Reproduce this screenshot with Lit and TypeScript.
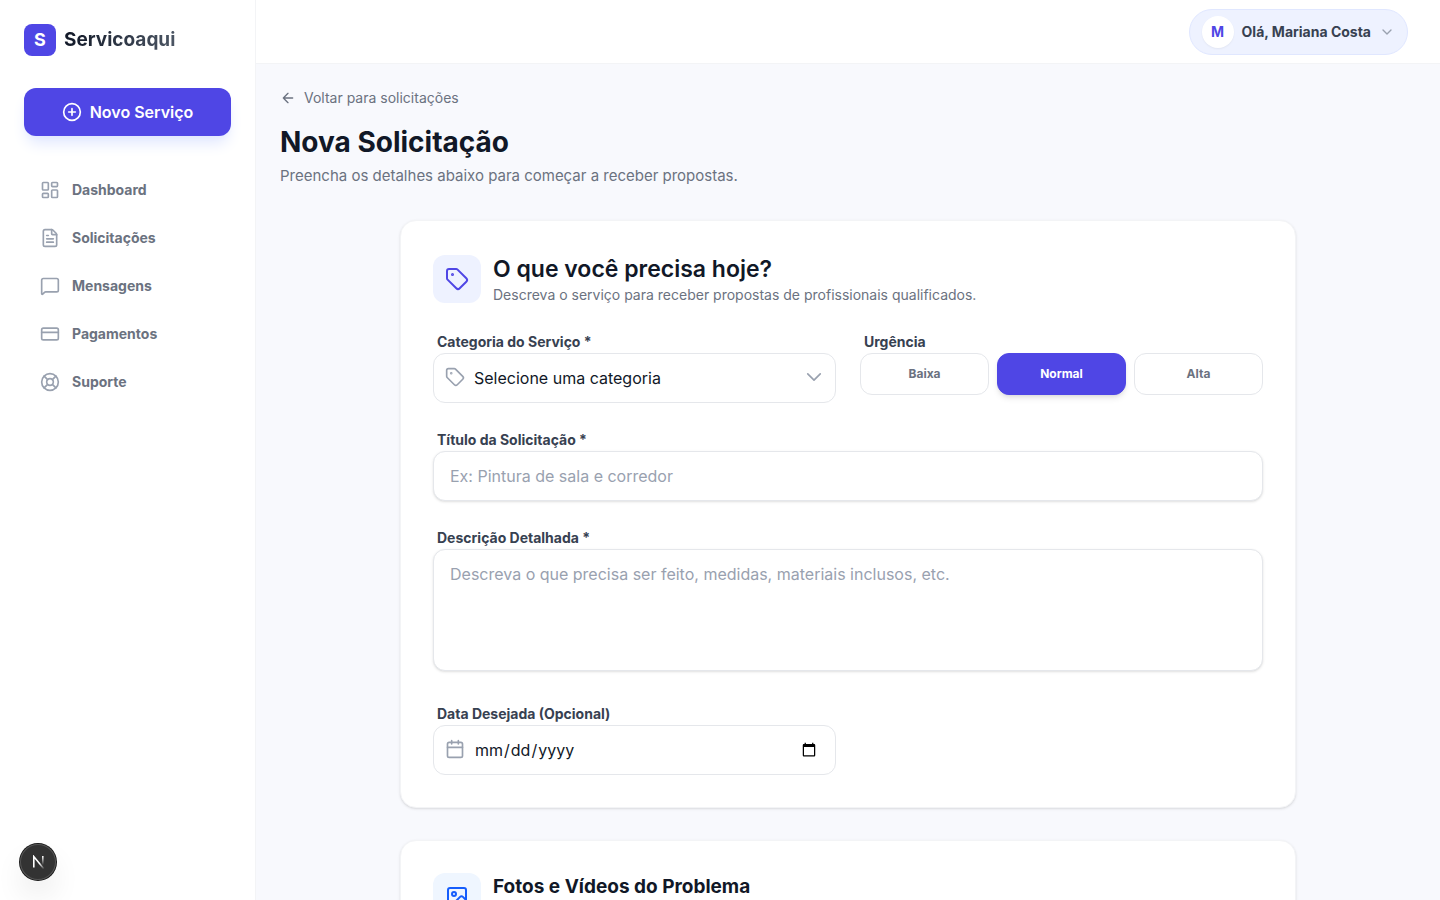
import { LitElement, html, svg, css } from "lit";
import { customElement, state } from "lit/decorators.js";
import { classMap } from "lit/directives/class-map.js";

const shapes = {
  plus: svg`<circle cx="12" cy="12" r="10"/><path d="M8 12h8M12 8v8"/>`,
  dashboard: svg`<rect width="7" height="9" x="3" y="3" rx="1"/><rect width="7" height="5" x="14" y="3" rx="1"/><rect width="7" height="9" x="14" y="12" rx="1"/><rect width="7" height="5" x="3" y="16" rx="1"/>`,
  file: svg`<path d="M6 22a2 2 0 0 1-2-2V4a2 2 0 0 1 2-2h8a2.4 2.4 0 0 1 1.704.706l3.588 3.588A2.4 2.4 0 0 1 20 8v12a2 2 0 0 1-2 2z"/><path d="M14 2v5a1 1 0 0 0 1 1h5M10 9H8M16 13H8M16 17H8"/>`,
  message: svg`<path d="M22 17a2 2 0 0 1-2 2H6.828a2 2 0 0 0-1.414.586l-2.202 2.202A.71.71 0 0 1 2 21.286V5a2 2 0 0 1 2-2h16a2 2 0 0 1 2 2z"/>`,
  card: svg`<rect width="20" height="14" x="2" y="5" rx="2"/><path d="M2 10h20"/>`,
  support: svg`<circle cx="12" cy="12" r="10"/><path d="m4.93 4.93 4.24 4.24M14.83 9.17l4.24-4.24M14.83 14.83l4.24 4.24M9.17 14.83l-4.24 4.24"/><circle cx="12" cy="12" r="4"/>`,
  back: svg`<path d="m12 19-7-7 7-7M19 12H5"/>`,
  chevron: svg`<path d="m6 9 6 6 6-6"/>`,
  chevronWide: svg`<path d="m19.5 8.25-7.5 7.5-7.5-7.5"/>`,
  tag: svg`<path d="M12.586 2.586A2 2 0 0 0 11.172 2H4a2 2 0 0 0-2 2v7.172a2 2 0 0 0 .586 1.414l8.704 8.704a2.426 2.426 0 0 0 3.42 0l6.58-6.58a2.426 2.426 0 0 0 0-3.42z"/><circle cx="7.5" cy="7.5" r=".5" fill="currentColor"/>`,
  calendar: svg`<path d="M8 2v4M16 2v4"/><rect width="18" height="18" x="3" y="4" rx="2"/><path d="M3 10h18"/>`,
  image: svg`<rect width="18" height="18" x="3" y="3" rx="2"/><circle cx="9" cy="9" r="2"/><path d="m21 15-3.086-3.086a2 2 0 0 0-2.828 0L6 21"/>`,
};

const icon = (name: keyof typeof shapes, size: number) => html`<svg
  width=${size} height=${size} viewBox="0 0 24 24" fill="none" stroke="currentColor"
  stroke-width="2" stroke-linecap="round" stroke-linejoin="round" aria-hidden="true"
>${shapes[name]}</svg>`;

const base = css`
  *, *::before, *::after { box-sizing: border-box; margin: 0; }
  svg { display: block; flex: none; }
  a { color: inherit; text-decoration: none; }
  button, input, select, textarea { font: inherit; color: inherit; }
  button { cursor: pointer; }
`;

@customElement("app-sidebar")
class AppSidebar extends LitElement {
  static styles = [base, css`
    :host {
      display: flex; flex-direction: column; gap: 32px;
      width: 256px; flex: none; padding: 24px;
      background: #fff; border-right: 1px solid #f3f4f6;
    }
    .brand { display: flex; align-items: center; gap: 8px; }
    .mark {
      display: grid; place-items: center; width: 32px; height: 32px;
      border-radius: 8px; background: #4f46e5; color: #fff; font-size: 18px; font-weight: 700;
    }
    .name {
      font-size: 19px; line-height: 28px; font-weight: 700;
      background: linear-gradient(to right, #111827, #4b5563);
      -webkit-background-clip: text; background-clip: text; color: transparent;
    }
    .new {
      display: flex; align-items: center; justify-content: center; gap: 8px;
      height: 48px; border-radius: 12px; background: #4f46e5; color: #fff;
      font-weight: 600; box-shadow: 0 10px 15px -3px #e0e7ff, 0 4px 6px -4px #e0e7ff;
    }
    nav { display: flex; flex-direction: column; gap: 4px; }
    .item {
      display: flex; align-items: center; gap: 12px; padding: 12px 16px;
      border-radius: 12px; font-size: 14px; line-height: 20px; font-weight: 700; color: #6b7280;
    }
    .item svg { color: #99a1af; }
    .item:hover { background: #f9fafb; }
  `];

  items: [keyof typeof shapes, string][] = [
    ["dashboard", "Dashboard"],
    ["file", "Solicitações"],
    ["message", "Mensagens"],
    ["card", "Pagamentos"],
    ["support", "Suporte"],
  ];

  render() {
    return html`
      <a class="brand" href="#"><span class="mark">S</span><span class="name">Servicoaqui</span></a>
      <a class="new" href="#">${icon("plus", 20)}<span>Novo Serviço</span></a>
      <nav>
        ${this.items.map(([name, label]) => html`<a class="item" href="#">${icon(name, 20)}<span>${label}</span></a>`)}
      </nav>
    `;
  }
}

@customElement("app-topbar")
class AppTopbar extends LitElement {
  static styles = [base, css`
    :host {
      display: flex; align-items: center; justify-content: flex-end;
      height: 64px; flex: none; padding: 0 32px;
      background: #fff; border-bottom: 1px solid #f3f4f6;
    }
    .user {
      display: flex; align-items: center; gap: 8px; padding: 6px 12px;
      border: 1px solid #e0e7ff; border-radius: 24px; background: #eef2ff;
      font-size: 14px; line-height: 20px; font-weight: 700; color: #374151;
    }
    .avatar {
      display: grid; place-items: center; width: 32px; height: 32px; border-radius: 50%;
      background: #fff; color: #4f46e5; box-shadow: 0 1px 2px rgb(0 0 0 / 0.05);
    }
    .user svg { color: #99a1af; }
  `];

  render() {
    return html`<button class="user" type="button">
      <span class="avatar">M</span><span>Olá, Mariana Costa</span>${icon("chevron", 16)}
    </button>`;
  }
}

@customElement("request-form")
class RequestForm extends LitElement {
  static styles = [base, css`
    :host { display: block; }
    form { display: flex; flex-direction: column; gap: 32px; max-width: 896px; margin: 0 auto; }
    .card {
      display: flex; flex-direction: column; gap: 24px; padding: 32px;
      border: 1px solid #f3f4f6; border-radius: 16px; background: #fff;
      box-shadow: 0 1px 3px rgb(0 0 0 / 0.1), 0 1px 2px -1px rgb(0 0 0 / 0.1);
    }
    .head { display: flex; align-items: center; gap: 12px; }
    .head.top { align-items: flex-start; }
    .badge {
      display: grid; place-items: center; width: 48px; height: 48px; flex: none;
      border-radius: 12px; background: #eef2ff; color: #4f46e5;
    }
    .badge.blue { background: #eff6ff; color: #155dfc; }
    h2 { font-size: 23px; line-height: 32px; font-weight: 600; color: #111827; }
    h3 { font-size: 19px; line-height: 28px; font-weight: 700; color: #111827; }
    .hint { font-size: 14px; line-height: 20px; color: #6b7280; }
    .grid { display: grid; grid-template-columns: 1fr 1fr; gap: 24px; }
    .field { display: flex; flex-direction: column; min-width: 0; border: 0; padding: 0; }
    .label {
      padding: 2px 4px 0; font-size: 14px; line-height: 22px; font-weight: 700; color: #374151;
    }
    .control {
      width: 100%; height: 50px; padding: 12px 16px; border: 1px solid #e5e7eb; border-radius: 12px;
      background: #fff; color: #111827; line-height: 24px; outline-color: #4f46e5;
    }
    .control::placeholder { color: #99a1af; opacity: 1; }
    .raised { box-shadow: 0 1px 3px rgb(0 0 0 / 0.1), 0 1px 2px -1px rgb(0 0 0 / 0.1); }
    textarea.control { display: block; height: 122px; resize: none; margin-bottom: 6px; }
    .wrap { display: grid; align-items: center; color: #99a1af; }
    .wrap > * { grid-area: 1 / 1; }
    .wrap svg { z-index: 1; pointer-events: none; margin-left: 12px; margin-bottom: 2px; }
    .wrap svg:last-child { justify-self: end; margin-right: 12px; }
    .wrap .control { padding-left: 40px; }
    .wrap select { appearance: none; }
    .options { display: grid; grid-template-columns: repeat(3, 1fr); gap: 8px; }
    .option {
      height: 42px; border: 1px solid #e5e7eb; border-radius: 12px; background: #fff;
      font-size: 12px; line-height: 16px; font-weight: 700; color: #6b7280;
    }
    .option.on {
      border-color: #4f46e5; background: #4f46e5; color: #fff;
      box-shadow: 0 4px 6px -1px rgb(0 0 0 / 0.1), 0 2px 4px -2px rgb(0 0 0 / 0.1);
    }
  `];

  @state() urgency = "Normal";

  render() {
    return html`<form>
      <section class="card">
        <header class="head">
          <span class="badge">${icon("tag", 24)}</span>
          <div>
            <h2>O que você precisa hoje?</h2>
            <p class="hint">Descreva o serviço para receber propostas de profissionais qualificados.</p>
          </div>
        </header>
        <div class="grid">
          <div class="field">
            <label class="label" for="category">Categoria do Serviço *</label>
            <div class="wrap">
              ${icon("tag", 20)}
              <select class="control" id="category"><option>Selecione uma categoria</option></select>
              ${icon("chevronWide", 20)}
            </div>
          </div>
          <div class="field" role="group" aria-labelledby="urgency">
            <span class="label" id="urgency">Urgência</span>
            <div class="options">
              ${["Baixa", "Normal", "Alta"].map((level) => html`<button type="button"
                class=${classMap({ option: true, on: this.urgency === level })}
                aria-pressed=${this.urgency === level}
                @click=${() => (this.urgency = level)}>${level}</button>`)}
            </div>
          </div>
        </div>
        <div class="field">
          <label class="label" for="title">Título da Solicitação *</label>
          <input class="control raised" id="title" type="text" placeholder="Ex: Pintura de sala e corredor">
        </div>
        <div class="field">
          <label class="label" for="details">Descrição Detalhada *</label>
          <textarea class="control raised" id="details" placeholder="Descreva o que precisa ser feito, medidas, materiais inclusos, etc."></textarea>
        </div>
        <div class="grid">
          <div class="field">
            <label class="label" for="date">Data Desejada (Opcional)</label>
            <div class="wrap">
              ${icon("calendar", 20)}
              <input class="control" id="date" type="date">
            </div>
          </div>
        </div>
      </section>
      <section class="card">
        <header class="head top">
          <span class="badge blue">${icon("image", 24)}</span>
          <h3>Fotos e Vídeos do Problema</h3>
        </header>
      </section>
    </form>`;
  }
}

@customElement("app-root")
class AppRoot extends LitElement {
  static styles = [base, css`
    :host {
      display: flex; height: 100vh; overflow: hidden; background: #f8f9fd; color: #111827;
      font-family: Inter, "Liberation Sans", sans-serif; font-size: 16px; line-height: 24px;
    }
    .main { display: flex; flex-direction: column; flex: 1; min-width: 0; }
    main { flex: 1; min-height: 0; overflow: auto; scrollbar-width: none; padding: 24px; }
    .back {
      display: inline-flex; align-items: center; gap: 8px;
      font-size: 14px; line-height: 20px; color: #6b7280;
    }
    .intro { display: flex; flex-direction: column; gap: 4px; margin: 16px 0 32px; }
    h1 { font-size: 28px; line-height: 36px; font-weight: 700; color: #111827; }
    .lead { font-size: 15px; color: #6b7280; }
    .top { display: flex; }
    .dev {
      position: fixed; left: 20px; bottom: 20px; display: grid; place-items: center;
      width: 36px; height: 36px; padding: 0; border: 0; border-radius: 50%; background: #333;
      box-shadow: 0 0 0 1px #171717, inset 0 0 0 1px #555, 0 16px 32px -8px rgb(0 0 0 / 0.24);
    }
  `];

  render() {
    return html`
      <app-sidebar></app-sidebar>
      <div class="main">
        <app-topbar></app-topbar>
        <main>
          <div class="top"><a class="back" href="#">${icon("back", 16)}<span>Voltar para solicitações</span></a></div>
          <div class="intro">
            <h1>Nova Solicitação</h1>
            <p class="lead">Preencha os detalhes abaixo para começar a receber propostas.</p>
          </div>
          <request-form></request-form>
        </main>
      </div>
      <button class="dev" type="button" aria-label="Next.js">
        <svg width="14" height="14" viewBox="0 0 14 14" fill="none" stroke-width="1.6">
          <defs>
            <linearGradient id="diag" gradientUnits="userSpaceOnUse" x1="8" y1="9" x2="12.5" y2="14.5">
              <stop stop-color="#fff"/><stop offset="1" stop-color="#fff" stop-opacity="0"/>
            </linearGradient>
            <linearGradient id="stem" gradientUnits="userSpaceOnUse" x1="11.8" y1="1" x2="11.8" y2="10">
              <stop stop-color="#fff"/><stop offset="1" stop-color="#fff" stop-opacity="0"/>
            </linearGradient>
          </defs>
          <path d="M13 14 2.8 1.6V12.6" stroke="url(#diag)"/>
          <path d="M11.8 1v11" stroke="url(#stem)"/>
        </svg>
      </button>
    `;
  }
}
